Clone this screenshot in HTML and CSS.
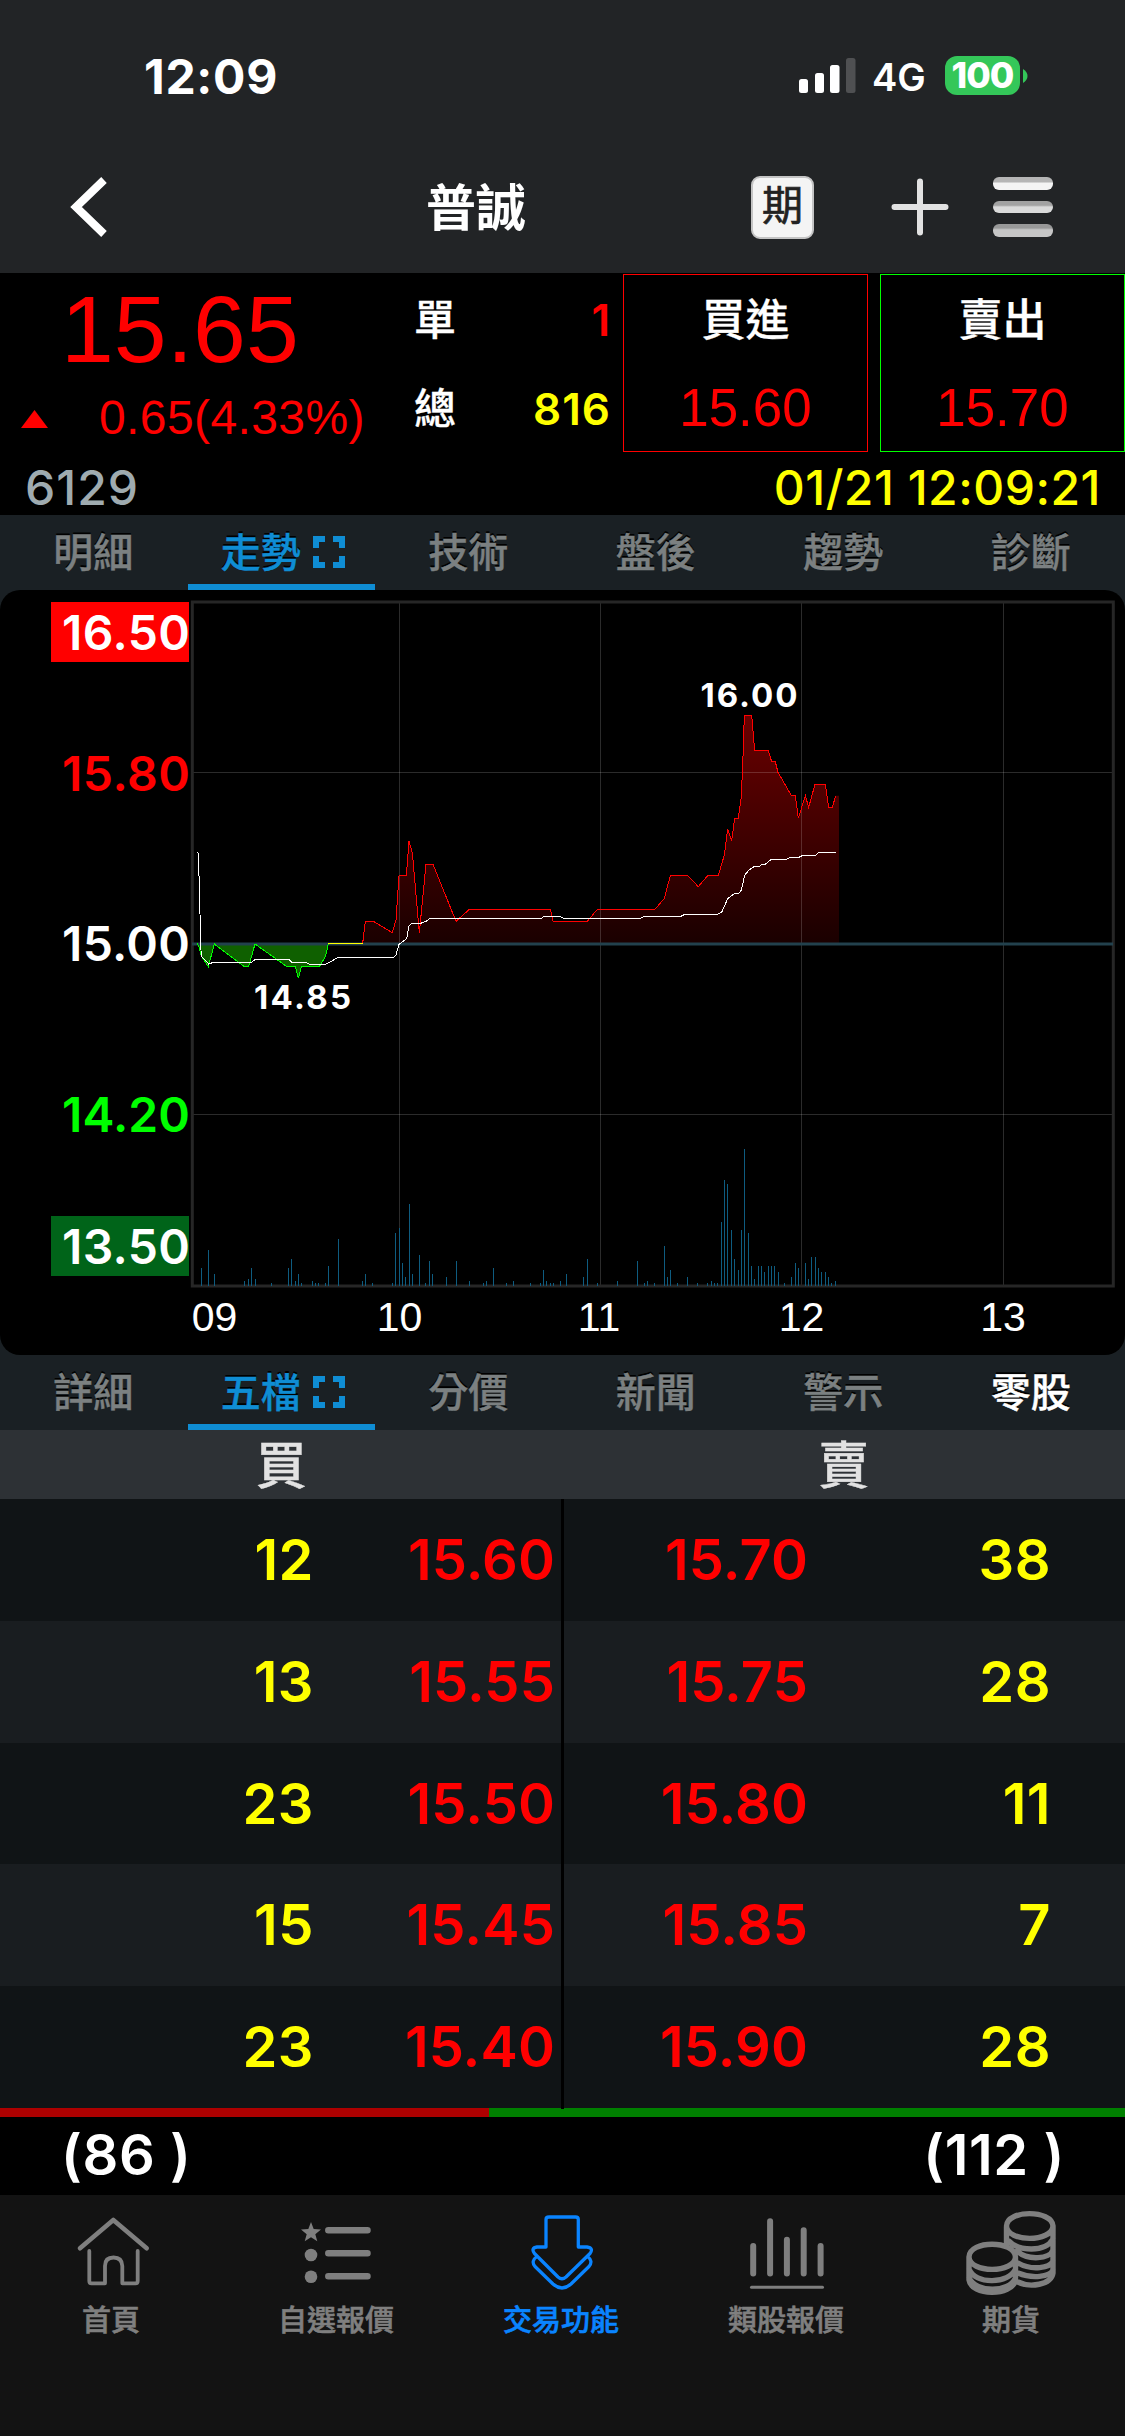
FILE: index.html
```html
<!DOCTYPE html>
<html lang="zh-Hant">
<head>
<meta charset="utf-8">
<title>普誠 6129</title>
<link rel="stylesheet" href="styles.css">
</head>
<body>
<div class="app">
  <header class="top">
    <div class="status">
      <span class="clock">12:09</span>
      <div class="status-right">
        <svg class="signal" width="57" height="35" viewBox="0 0 57 35">
          <rect x="0" y="21" width="9" height="14" rx="2.5" fill="#fff"/>
          <rect x="16" y="15" width="9" height="20" rx="2.5" fill="#fff"/>
          <rect x="31" y="7" width="9.500" height="28" rx="2.500" fill="#fff"/>
          <rect x="47" y="0" width="9.500" height="35" rx="2.500" fill="#4f5052"/>
        </svg>
        <span class="net">4G</span>
        <span class="battery">100</span>
        <svg class="nub" width="5" height="14" viewBox="0 0 5 14"><path d="M0 0Q4.500 3 4.500 7T0 14Z" fill="#34c759"/></svg>
      </div>
    </div>
    <div class="titlebar">
      <svg class="back" width="40" height="64" viewBox="0 0 40 64"><path d="M35 5L7 32L35 59" fill="none" stroke="#fff" stroke-width="8"/></svg>
      <h1 class="title">普誠</h1>
      <span class="futures">期</span>
      <svg class="plus" width="58" height="58" viewBox="0 0 58 58"><path d="M3.500 29H54.500M29 3.500V54.500" stroke="#e2e2e2" stroke-width="6" stroke-linecap="round"/></svg>
      <div class="menu"><i class="m1"></i><i class="m2"></i><i class="m3"></i></div>
    </div>
  </header>

  <section class="quote">
    <div class="quote-main">
      <div class="last">
        <div class="price">15.65</div>
        <div class="change"><svg width="27" height="18" viewBox="0 0 27 18"><path d="M13.500 0L27 18H0Z" fill="#f00"/></svg><span>0.65(4.33%)</span></div>
      </div>
      <div class="vols">
        <div class="vol"><span>單</span><b class="red">1</b></div>
        <div class="vol"><span>總</span><b class="yellow">816</b></div>
      </div>
      <div class="deal buy"><span>買進</span><em>15.60</em></div>
      <div class="deal sell"><span>賣出</span><em>15.70</em></div>
    </div>
    <div class="meta"><span class="code">6129</span><span class="stamp">01/21 12:09:21</span></div>
  </section>

  <nav class="tabs">
    <a>明細</a>
    <a class="on">走勢<svg width="32" height="32" viewBox="0 0 32 32"><path d="M3 12V3H12M20 3H29V12M29 20V29H20M12 29H3V20"/></svg></a>
    <a>技術</a><a>盤後</a><a>趨勢</a><a>診斷</a>
  </nav>

  <section class="chart">
    <svg width="1125" height="765" viewBox="0 590 1125 765">
      <defs>
        <linearGradient id="up" gradientUnits="userSpaceOnUse" x1="0" y1="376" x2="0" y2="1060">
          <stop offset="0" stop-color="#6a0000"/><stop offset="1" stop-color="#1a0000"/>
        </linearGradient>
      </defs>
      <g transform="translate(180 590) scale(.333333)">
        <path fill="url(#up)" d="M548 1060L556 994H580L637 1028L648 990L657 857H679L687 753L697 788L718 1028L738 823H759L828 994L868 958H1111L1119 994H1222L1252 958H1425L1453 925L1471 857H1523L1555 890L1583 857H1615L1633 795L1643 718L1655 753L1664 685H1675L1684 620L1689 500L1693 376H1715L1724 481H1765L1775 515H1786L1794 547L1834 617H1846L1855 685L1876 617L1886 652L1905 583H1936L1946 652H1957L1967 617H1977V1060Z"/>
        <path fill="#0f6000" d="M52 1060L57 1072L64 1098L85 1130L103 1062L193 1130H206L225 1062L321 1130H346L355 1165L364 1130H418L437 1098L445 1060Z"/>
      </g>
      <g class="grid">
        <path d="M399.500 602V1286M600.500 602V1286M801.500 602V1286M1003.500 602V1286M192 772.500H1114M192 1114.500H1114"/>
      </g>
      <rect x="192.300" y="602" width="921" height="684" fill="none" stroke="#262626" stroke-width="3"/>
      <path d="M192 944H1113" stroke="#22414d" stroke-width="3"/>
      <g class="series" transform="translate(180 590) scale(.333333)">
        <path stroke="#0f0" d="M52 1060L57 1072L64 1098L85 1130L103 1062L193 1130H206L225 1062L321 1130H346L355 1165L364 1130H418L437 1098L445 1060"/>
        <path stroke="#ff0" d="M445 1060.500H548"/>
        <path stroke="#f00" d="M548 1060L556 994H580L637 1028L648 990L657 857H679L687 753L697 788L718 1028L738 823H759L828 994L868 958H1111L1119 994H1222L1252 958H1425L1453 925L1471 857H1523L1555 890L1583 857H1615L1633 795L1643 718L1655 753L1664 685H1675L1684 620L1689 500L1693 376H1715L1724 481H1765L1775 515H1786L1794 547L1834 617H1846L1855 685L1876 617L1886 652L1905 583H1936L1946 652H1957L1967 617"/>
        <path stroke="#fff" d="M51 788H54L58 880L60 972L62 1064L64 1098L86 1122L100 1117H215L226 1108H326L335 1117H375L390 1123H437L475 1102H640L648 1095L657 1063L680 1046L687 1008L695 1000H722L740 993L748 986H1083L1090 980H1142L1152 986H1380L1390 980H1500L1515 973H1613L1625 967L1643 926L1663 911L1677 910L1684 900L1694 856L1706 841L1724 829H1738L1745 823L1757 822L1774 808H1820L1832 802H1857L1868 796H1907L1916 787H1967"/>
      </g>
      <g class="volume" transform="translate(180 1040) scale(.60268 .333333)">
        <path d="M36 738V684M47 738V630M57 738V702M107 738V723M113 738V717M118 738V684M125 738V717M152 738V729M180 738V684M185 738V657M191 738V723M196 738V702M201 738V729M220 738V723M225 738V729M230 738V729M241 738V729M246 738V678M263 738V597M303 738V723M308 738V702M319 738V729M352 738V729M357 738V579M364 738V564M369 738V669M374 738V711M381 738V492M386 738V702M397 738V645M408 738V729M414 738V663M419 738V702M442 738V711M459 738V663M480 738V723M503 738V729M508 738V723M520 738V684M542 738V729M553 738V723M581 738V729M598 738V729M603 738V690M608 738V723M615 738V729M620 738V729M631 738V723M641 738V702M669 738V711M676 738V657M693 738V729M726 738V723M759 738V663M771 738V729M776 738V723M787 738V729M804 738V618M809 738V711M814 738V690M825 738V729M842 738V711M858 738V729M875 738V729M882 738V723M887 738V729M892 738V729M898 738V546M903 738V420M908 738V432M915 738V570M920 738V657M927 738V690M932 738V570M936 738V327M943 738V579M948 738V678M953 738V717M960 738V678M965 738V678M970 738V696M976 738V678M981 738V678M986 738V678M993 738V696M1003 738V729M1014 738V711M1021 738V669M1026 738V684M1038 738V669M1043 738V717M1048 738V651M1054 738V651M1060 738V684M1065 738V696M1071 738V696M1076 738V711M1081 738V729M1087 738V723"/>
      </g>
      <rect x="51" y="602" width="138" height="60" fill="#f00"/>
      <rect x="51" y="1216" width="138" height="60" fill="#006419"/>
      <g class="ylab">
        <text x="62" y="650" textLength="128" fill="#fff">16.50</text>
        <text x="62" y="791" textLength="128" fill="#f00">15.80</text>
        <text x="62" y="961" textLength="128" fill="#fff">15.00</text>
        <text x="62" y="1132" textLength="128" fill="#0f0">14.20</text>
        <text x="62" y="1264" textLength="128" fill="#fff">13.50</text>
      </g>
      <g class="peak">
        <text x="700.500" y="707" textLength="97">16.00</text>
        <text x="254" y="1009" textLength="97">14.85</text>
      </g>
      <g class="xlab">
        <text x="214.500" y="1331">09</text><text x="399.500" y="1331">10</text><text x="599" y="1331">11</text><text x="801.500" y="1331">12</text><text x="1003" y="1331">13</text>
      </g>
    </svg>
  </section>

  <nav class="tabs">
    <a>詳細</a>
    <a class="on">五檔<svg width="32" height="32" viewBox="0 0 32 32"><path d="M3 12V3H12M20 3H29V12M29 20V29H20M12 29H3V20"/></svg></a>
    <a>分價</a><a>新聞</a><a>警示</a><a class="odd-lot">零股</a>
  </nav>

  <section class="book">
    <div class="book-head"><span>買</span><span>賣</span></div>
    <div class="level"><div class="bid"><b>12</b><i>15.60</i></div><div class="ask"><i>15.70</i><b>38</b></div></div>
    <div class="level"><div class="bid"><b>13</b><i>15.55</i></div><div class="ask"><i>15.75</i><b>28</b></div></div>
    <div class="level"><div class="bid"><b>23</b><i>15.50</i></div><div class="ask"><i>15.80</i><b>11</b></div></div>
    <div class="level"><div class="bid"><b>15</b><i>15.45</i></div><div class="ask"><i>15.85</i><b>7</b></div></div>
    <div class="level"><div class="bid"><b>23</b><i>15.40</i></div><div class="ask"><i>15.90</i><b>28</b></div></div>
    <div class="ratio"><div style="width:43.430%"></div></div>
    <div class="totals"><span>(86 )</span><span>(112 )</span></div>
  </section>

  <nav class="bottom">
    <a><svg width="225" height="95" viewBox="0 0 225 95"><path d="M80 43.300L113.300 15L146.700 43.300" stroke-width="4.600"/><path d="M89.300 46V76Q89.300 78.300 91.500 78.300H105V61Q105 52.500 113.500 52.500T122.300 61V78.300H135.500Q137.700 78.300 137.700 76V46" stroke-width="3.800"/></svg><span>首頁</span></a>
    <a><svg width="225" height="95" viewBox="0 0 225 95"><path d="M86 17L88.700 24L96 24.600L90.300 29.200L92.300 36.300L86 32.200L79.700 36.300L81.700 29.200L76 24.600L83.300 24Z" class="solid"/><circle cx="86" cy="50" r="6.300" class="solid"/><circle cx="86" cy="71.700" r="6.300" class="solid"/><path d="M103.300 25.300H142.500M103.300 48.300H142.500M103.300 71.300H142.500" stroke-width="6.500"/></svg><span>自選報價</span></a>
    <a class="on"><svg width="225" height="95" viewBox="0 0 225 95"><path stroke-width="3.300" d="M99 12H125.500Q128.300 12 128.300 14.500V42H137Q144 43 140 48.500L116 72Q112 75.500 108 72L84.500 48.500Q80.500 43 87 42H96V14.500Q96 12 99 12ZM87 51.500Q80.500 56 85 61.500L103 79Q112 87 121 79L139 61.500Q143.500 56 137.500 51.500"/></svg><span>交易功能</span></a>
    <a><svg width="225" height="95" viewBox="0 0 225 95"><path d="M78.200 41V68.500M95.100 16.300V68.500M111.900 34.700V68.500M128.700 25.300V68.500M145.600 41V68.500" stroke-width="6"/><path d="M76.500 82.300H147.500" stroke-width="3"/></svg><span>類股報價</span></a>
    <a><svg class="coins" width="225" height="95" viewBox="0 0 225 95"><path d="M106.500 21C107 4.500 152 4.500 153 21C152 37.500 107 37.500 106.500 21ZM106.500 22V38M153 21V68C151 80 130 83 118 77M109 36C118 46 145 48 153 34M117 46C128 56 150 54 153 45M118 58C132 66 150 63 153 56M118 68C132 74 150 72 153 65M69 52C69.500 35 114.500 35 115.500 52C114.500 68.500 69.500 68.500 69 52ZM69 52V75C71 91 112 92 115.500 75V52M69 64C75 80 109 79 115.500 64M69 73C76 88 109 88 115.500 73" stroke-width="5.400"/></svg><span>期貨</span></a>
  </nav>
</div>
</body>
</html>
```
FILE: styles.css
```css
* { box-sizing: border-box; margin: 0; padding: 0; }
body { width: 1125px; background: #131313; font-family: Inter, "Noto Sans CJK TC", sans-serif; color: #fff; }
svg { display: block; }
i, em { font-style: normal; }
.app { width: 1125px; height: 2436px; display: flex; flex-direction: column; overflow: hidden; }

.top { height: 273px; background: #222426; }
.status { height: 150px; padding: 1px 97px 0 144px; display: flex; justify-content: space-between; align-items: center; }
.clock { padding-top: 2px; font-size: 48px; font-weight: 700; line-height: 60px; letter-spacing: .7px; }
.status-right { display: flex; align-items: center; }
.net { width: 58px; margin-left: 16px; margin-right: 1px; margin-top: 3px; font-size: 38px; font-weight: 560; line-height: 50px; }
.battery { width: 75px; height: 39px; margin-left: 14px; border-radius: 12px; background: #34c759; font-size: 35.5px; font-weight: 800; line-height: 39px; text-align: center; letter-spacing: -1px; }
.nub { margin-left: 3px; }
.titlebar { height: 114px; padding-left: 69px; display: flex; align-items: center; }
.title { width: 104px; margin-left: 315px; padding-top: 2px; font-size: 50px; font-weight: 700; line-height: 60px; text-align: center; white-space: nowrap; }
.futures { width: 63px; height: 63px; margin-left: 223px; border: 2px solid #c4c4c4; border-radius: 9px; background: #f4f4f4; color: #222; font-size: 41px; line-height: 55px; text-align: center; -webkit-text-stroke: .7px; }
.plus { margin-left: 77px; }
.menu { width: 60px; margin-left: 44px; display: flex; flex-direction: column; gap: 11px; }
.menu i { height: 12.5px; border-radius: 6px; }
.m1 { background: linear-gradient(#b5b5b5 35%, #f4f4f4 50%); }
.m2 { background: linear-gradient(#a2a2a2 35%, #dadada 50%); }
.m3 { background: linear-gradient(#989898 30%, #c6c6c6 45%); }

.quote { height: 242px; background: #000; }
.quote-main { height: 180px; display: flex; }
.last { width: 405px; font-family: "Liberation Sans", sans-serif; color: #f00; }
.price { height: 116px; padding: 2px 0 0 61px; font-size: 95px; line-height: 108px; }
.change { display: flex; align-items: center; padding: 1px 0 0 21px; font-size: 48px; line-height: 56px; letter-spacing: .4px; }
.change svg { margin-top: 1px; }
.change span { margin-left: 51px; }
.vols { width: 206px; padding-top: 12px; }
.vol { height: 89px; display: flex; justify-content: space-between; align-items: flex-start; padding: 0 0 0 9px; font-size: 42px; font-weight: 500; line-height: 70px; }
.vol span, .deal span { -webkit-text-stroke: .3px; }
.vol b { font-size: 44px; font-weight: 560; letter-spacing: 1px; }
.red { color: #f00; }
.yellow { color: #ff0; }
.deal { width: 245px; height: 178px; margin: 1px 0 0 12px; border: 1.5px solid; display: flex; flex-direction: column; align-items: center; }
.deal span { padding-top: 10px; color: #fff; font-size: 44px; font-weight: 500; line-height: 70px; }
.deal em { padding-top: 22px; color: #f00; font: 53px/62px "Liberation Sans", sans-serif; }
.buy { border-color: #f00; }
.sell { border-color: #0f0; }
.meta { display: flex; justify-content: space-between; padding: 5px 24px 0 25px; font-size: 48px; line-height: 60px; }
.code { color: #9fabb0; font-weight: 500; letter-spacing: 1px; }
.stamp { color: #ff0; font-weight: 500; letter-spacing: .5px; }

.tabs { height: 75px; display: grid; grid-template-columns: repeat(6, 1fr); grid-template-rows: 75px; background: #1a2024; }
.tabs a { display: flex; justify-content: center; align-items: center; padding: 1px 1px 0 0; color: #7b8081; font-size: 40px; font-weight: 500; line-height: 60px; text-shadow: 0 -2px 0 #000; -webkit-text-stroke: .4px; }
.tabs .on { color: #0f8dd4; border-bottom: 6px solid #0f8dd4; padding: 6px 0 0 3px; gap: 12px; }
.tabs .on svg { margin-top: -1px; fill: none; stroke: #0f8dd4; stroke-width: 6; }
.tabs .odd-lot { color: #fff; }

.chart { height: 765px; background: #1a2024; }
.chart svg { border-radius: 20px; background: #000; }
.grid { stroke: #fff; stroke-opacity: .17; stroke-width: 1; fill: none; }
.series path { fill: none; stroke-width: 1; vector-effect: non-scaling-stroke; shape-rendering: crispEdges; }
.volume path { fill: none; stroke: #0e5c80; stroke-width: 1; vector-effect: non-scaling-stroke; shape-rendering: crispEdges; }
.ylab { font-size: 48px; font-weight: 560; }
.peak { font-size: 33px; font-weight: 700; fill: #fff; }
.xlab { font-family: "Liberation Sans", sans-serif; font-size: 41px; fill: #fff; text-anchor: middle; }

.book { height: 765px; }
.book-head { height: 69px; display: grid; grid-template-columns: 1fr 1fr; background: #2d3135; color: #e2e2e2; font-size: 51px; font-weight: 500; line-height: 72px; text-align: center; overflow: hidden; -webkit-text-stroke: .4px; }
.level { height: 121.8px; display: grid; grid-template-columns: 564px 1fr; background: #101416; font-size: 56px; line-height: 123px; letter-spacing: .1px; }
.level:nth-child(odd) { background: #191d20; }
.level b, .level i { font-weight: 560; text-align: right; }
.level b { color: #ff0; letter-spacing: .5px; }
.level i { color: #f00; }
.bid { display: grid; grid-template-columns: 314px 241px; border-right: 3px solid #000; }
.ask { display: grid; grid-template-columns: 244px 243px; }
.ratio { height: 9px; background: #008000; }
.ratio div { height: 9px; background: #ad0000; }
.totals { height: 78px; padding: 0 60px 0 61px; display: flex; justify-content: space-between; background: #000; font-size: 56px; font-weight: 560; line-height: 77px; letter-spacing: .6px; }

.bottom { flex: 1; display: grid; grid-template-columns: repeat(5, 1fr); padding-top: 10px; background: #131313; }
.bottom a { color: #7f7f7f; font-size: 29px; font-weight: 500; line-height: 41px; text-align: center; }
.bottom span { display: block; padding-right: 3px; -webkit-text-stroke: .6px; }
.bottom svg { fill: none; stroke: currentColor; stroke-linecap: round; stroke-linejoin: round; }
.bottom .solid { fill: currentColor; stroke: none; }
.bottom .on { color: #0a84ff; }
```
